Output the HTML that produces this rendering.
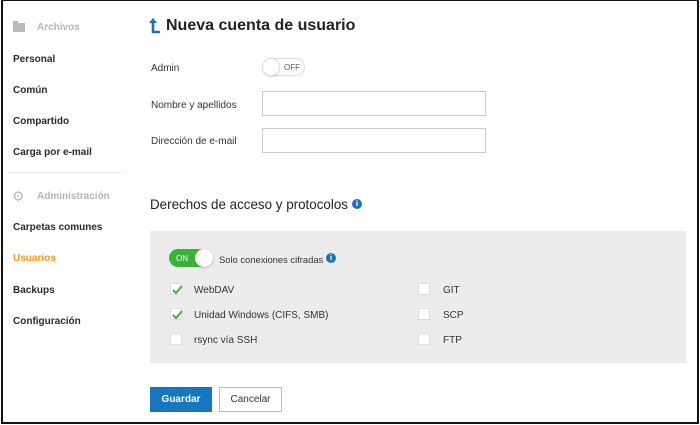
<!DOCTYPE html>
<html><head><meta charset="utf-8"><style>
*{margin:0;padding:0;box-sizing:border-box}
body{width:700px;height:425px;background:#fff;font-family:"Liberation Sans",sans-serif;color:#333;position:relative;overflow:hidden}
.frame{position:absolute;left:1px;top:0;width:698px;height:424px;border:2px solid #111;border-top-width:1px}
.a{position:absolute;white-space:nowrap}
.nav{font-size:10px;font-weight:bold;color:#2b2b2b}
.sec{font-size:10px;font-weight:bold;color:#b5b5b5}
.lbl{font-size:10px;color:#333}
.inp{position:absolute;width:224px;height:25px;border:1px solid #ccc;background:#fff}
.cb{position:absolute;width:12px;height:12px;border:1px solid #ddd;background:#fff}
.cb svg{position:absolute;left:0;top:0}
.info{position:absolute;width:10px;height:10px;border-radius:50%;background:#1a73ba;color:#fff;font-size:8px;font-weight:bold;text-align:center;line-height:10px;font-family:"Liberation Serif",serif}
</style></head><body>
<div class="frame"></div>
<!-- sidebar -->
<div class="a" style="left:13px;top:23px;width:12px;height:9px;background:#bbb"></div>
<div class="a" style="left:13px;top:21px;width:5px;height:3px;background:#bbb"></div>
<div class="a sec" style="left:37px;top:22px">Archivos</div>
<div class="a nav" style="left:13px;top:54px">Personal</div>
<div class="a nav" style="left:13px;top:85px">Común</div>
<div class="a nav" style="left:13px;top:116px">Compartido</div>
<div class="a nav" style="left:13px;top:147px">Carga por e-mail</div>
<div class="a" style="left:8px;top:172px;width:117px;height:1px;background:#eee"></div>
<div class="a" style="left:12px;top:189px;font-size:14px;color:#bbb;line-height:14px">⚙</div>
<div class="a sec" style="left:37px;top:191px">Administración</div>
<div class="a nav" style="left:13px;top:222px">Carpetas comunes</div>
<div class="a nav" style="left:13px;top:253px;color:#f7941d">Usuarios</div>
<div class="a nav" style="left:13px;top:285px">Backups</div>
<div class="a nav" style="left:13px;top:316px">Configuración</div>
<!-- title -->
<svg class="a" style="left:149px;top:18px" width="12" height="17" viewBox="0 0 12 17"><path d="M4 2 L4 14 L11 14" fill="none" stroke="#1a73ba" stroke-width="2.6"/><path d="M0 5 L4 0 L8 5 Z" fill="#1a73ba"/></svg>
<div class="a" style="left:166px;top:17px;font-size:16px;font-weight:bold;color:#222">Nueva cuenta de usuario</div>
<div class="a lbl" style="left:151px;top:63px">Admin</div>
<div class="a" style="left:262px;top:58px;width:43px;height:18px;border:1px solid #ddd;border-radius:9px;background:#fff"></div>
<div class="a" style="left:262px;top:58px;width:18px;height:18px;border:1px solid #ddd;border-radius:50%;background:#fff;box-shadow:0 1px 2px rgba(0,0,0,.15)"></div>
<div class="a" style="left:284px;top:63px;font-size:8px;color:#555">OFF</div>
<div class="a lbl" style="left:151px;top:100px">Nombre y apellidos</div>
<div class="inp" style="left:262px;top:91px"></div>
<div class="a lbl" style="left:151px;top:136px">Dirección de e-mail</div>
<div class="inp" style="left:262px;top:128px"></div>
<div class="a" style="left:150px;top:197px;font-size:13.4px;color:#222">Derechos de acceso y protocolos</div>
<div class="info" style="left:352px;top:199px">i</div>
<!-- panel -->
<div class="a" style="left:150px;top:231px;width:536px;height:132px;background:#ececec"></div>
<div class="a" style="left:169px;top:249px;width:44px;height:18px;border-radius:9px;background:#3bb33b"></div>
<div class="a" style="left:176px;top:254px;font-size:8px;color:#fff">ON</div>
<div class="a" style="left:195px;top:249px;width:18px;height:18px;border-radius:50%;background:#fff;box-shadow:0 1px 2px rgba(0,0,0,.2)"></div>
<div class="a lbl" style="left:219px;top:254px;font-size:9.4px">Solo conexiones cifradas</div>
<div class="info" style="left:326px;top:253px">i</div>
<div class="cb" style="left:170px;top:283px"><svg width="12" height="12"><path d="M2 6 L5 9 L11 2" fill="none" stroke="#3bb33b" stroke-width="2"/></svg></div>
<div class="a lbl" style="left:194px;top:285px">WebDAV</div>
<div class="cb" style="left:170px;top:308px"><svg width="12" height="12"><path d="M2 6 L5 9 L11 2" fill="none" stroke="#3bb33b" stroke-width="2"/></svg></div>
<div class="a lbl" style="left:194px;top:310px">Unidad Windows (CIFS, SMB)</div>
<div class="cb" style="left:170px;top:333px"></div>
<div class="a lbl" style="left:194px;top:335px">rsync vía SSH</div>
<div class="cb" style="left:418px;top:283px"></div>
<div class="a lbl" style="left:443px;top:285px">GIT</div>
<div class="cb" style="left:418px;top:308px"></div>
<div class="a lbl" style="left:443px;top:310px">SCP</div>
<div class="cb" style="left:418px;top:333px"></div>
<div class="a lbl" style="left:443px;top:335px">FTP</div>
<!-- buttons -->
<div class="a" style="left:150px;top:387px;width:62px;height:25px;background:#1677be;color:#fff;font-size:10px;font-weight:bold;text-align:center;line-height:25px">Guardar</div>
<div class="a" style="left:219px;top:387px;width:63px;height:25px;border:1px solid #bbb;background:#fff;color:#333;font-size:10px;text-align:center;line-height:23px">Cancelar</div>
</body></html>
